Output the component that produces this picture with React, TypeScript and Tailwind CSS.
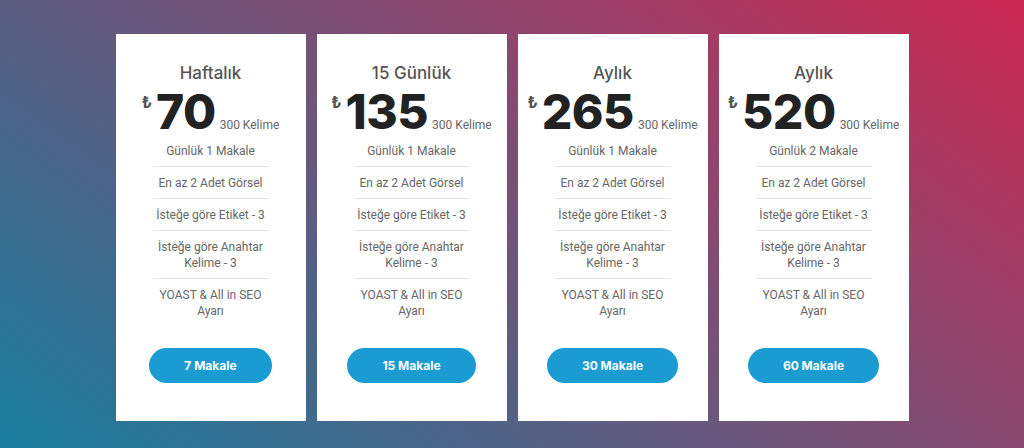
const plans = [
	{ title: "Haftalık", price: "70", daily: "Günlük 1 Makale", button: "7 Makale" },
	{ title: "15 Günlük", price: "135", daily: "Günlük 1 Makale", button: "15 Makale" },
	{ title: "Aylık", price: "265", daily: "Günlük 1 Makale", button: "30 Makale" },
	{ title: "Aylık", price: "520", daily: "Günlük 2 Makale", button: "60 Makale" },
];

const PlanCard: React.FC<{
	title: string;
	price: string;
	daily: string;
	button: string;
}> = ({ title, price, daily, button }) => {
	const features = [
		daily,
		"En az 2 Adet Görsel",
		"İsteğe göre Etiket - 3",
		"İsteğe göre Anahtar Kelime - 3",
		"YOAST & All in SEO Ayarı",
	];
	return (
		<div className="w-[190px] h-[387px] bg-white flex flex-col items-center pt-[29px]">
			<div className="text-[17px] leading-[20px] font-medium text-[#555]">{title}</div>
			<div className="flex items-baseline h-[48px] mt-[5px]">
				<span className="self-start mt-[6px] mr-[4px] text-[16px] leading-none font-bold text-[#555]">
					₺
				</span>
				<span className="text-[48px] leading-[48px] font-extrabold text-[#222] tracking-[-0.5px]">
					{price}
				</span>
				<span
					className="ml-[4px] text-[12px] text-[#666]"
					style={{ fontFamily: "Roboto, sans-serif" }}
				>
					300 Kelime
				</span>
			</div>
			<ul className="w-[116px] -mt-[1px]" style={{ fontFamily: "Roboto, sans-serif" }}>
				{features.map((f, i) => (
					<li
						key={i}
						className={
							"pt-[8px] pb-[7px] text-center text-[12px] leading-[16px] text-[#666]" +
							(i < features.length - 1 ? " border-b border-[#e6e6e6]" : "")
						}
					>
						{f}
					</li>
				))}
			</ul>
			<button
				type="button"
				className="mt-[22px] h-[35px] px-[35px] rounded-full bg-[#1a9bd2] text-white text-[12px] font-bold"
			>
				{button}
			</button>
		</div>
	);
};

export default function App() {
	return (
		<div
			className="w-full h-[448px] overflow-hidden flex justify-center gap-[11px] pt-[34px] bg-[linear-gradient(36deg,#177e9e,#cc2953)]"
			style={{ fontFamily: "Inter, 'Noto Sans', sans-serif" }}
		>
			{plans.map((p, i) => (
				<PlanCard key={i} {...p} />
			))}
		</div>
	);
}
